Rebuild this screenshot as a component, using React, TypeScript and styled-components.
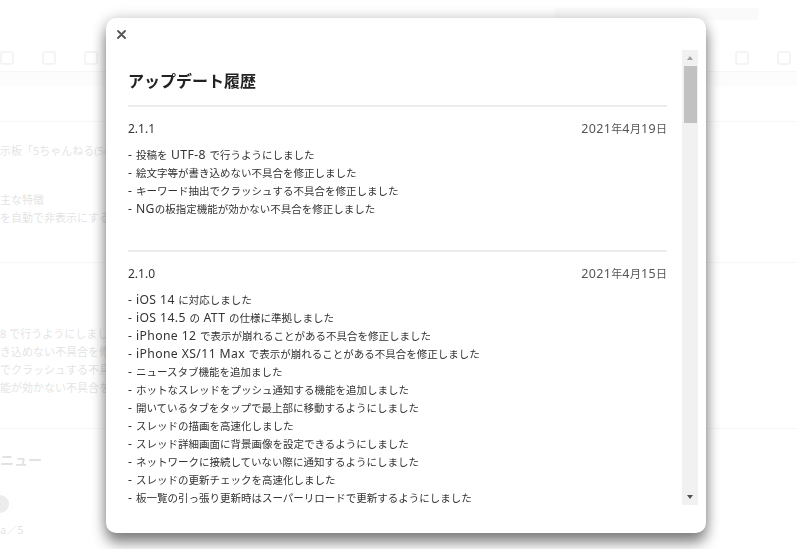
import React from "react";
import styled, { createGlobalStyle } from "styled-components";

const Global = createGlobalStyle`
  html, body { margin: 0; padding: 0; background: #fff; }
  body { font-family: "Noto Sans", "Noto Sans CJK JP", sans-serif; color: #333; overflow: hidden; }
  * { box-sizing: border-box; }
`;

/* ---------- background page ---------- */
const Page = styled.div`
  width: 797px;
  height: 549px;
  overflow: hidden;
  display: flex;
  flex-direction: column;
`;
const TopBar = styled.div`
  height: 45px;
  display: flex;
  justify-content: flex-end;
  align-items: flex-start;
  padding: 8px 38px 0 0;
`;
const TopPill = styled.div`
  width: 205px;
  height: 12px;
  border-radius: 4px;
  background: #dcdcdc;
`;
const TabBar = styled.div`
  height: 27px;
  border-bottom: 1px solid #bbb;
  display: flex;
  align-items: center;
  justify-content: space-between;
  padding: 0 6px 0 0;
`;
const TabGroup = styled.div`
  display: flex;
  gap: 28px;
  align-items: center;
`;
const TabIcon = styled.div`
  width: 14px;
  height: 14px;
  border: 2px solid #b0b0b0;
  border-radius: 3px;
`;
const Band = styled.div`
  height: 14px;
  background: #eaeaea;
`;
const Block = styled.div<{ $h: number }>`
  height: ${(p) => p.$h}px;
  border-bottom: 1px solid #c8c8c8;
  display: flex;
  flex-direction: column;
  padding-top: ${(p) => (p.$h > 100 ? 20 : 0)}px;
`;
const BgText = styled.div<{ $size?: number; $bold?: boolean }>`
  font-size: ${(p) => p.$size || 11}px;
  font-weight: ${(p) => (p.$bold ? 700 : 400)};
  line-height: 18px;
  color: #333;
  white-space: nowrap;
`;
const Spacer = styled.div<{ $h: number }>`
  height: ${(p) => p.$h}px;
  flex: none;
`;
const Circle = styled.div`
  width: 18px;
  height: 18px;
  border-radius: 50%;
  background: #777;
  margin-left: -9px;
`;

/* ---------- overlay + modal ---------- */
const Veil = styled.div`
  position: fixed;
  inset: 0;
  background: rgba(255, 255, 255, 0.86);
`;
const Modal = styled.div`
  position: fixed;
  left: 106px;
  top: 18px;
  width: 600px;
  height: 515px;
  background: #fff;
  border-radius: 10px;
  box-shadow: 0 10px 14px rgba(0, 0, 0, 0.45), 0 0 14px rgba(0, 0, 0, 0.2);
  display: flex;
  flex-direction: column;
`;
const ModalHead = styled.div`
  height: 32px;
  display: flex;
  align-items: flex-start;
  padding: 12px 0 0 11px;
`;
const CloseBtn = styled.button`
  width: 9px;
  height: 9px;
  padding: 0;
  border: none;
  background: none;
  cursor: pointer;
  & svg { display: block; }
`;
const Body = styled.div`
  flex: 1;
  display: flex;
  padding: 0 8px 28px 6px;
  min-height: 0;
`;
const Scroller = styled.div`
  flex: 1;
  overflow: hidden;
  padding: 18px 15px 0 16px;
`;
const Title = styled.h2`
  margin: 0 0 13px;
  font-size: 16px;
  line-height: 24px;
  font-weight: 700;
  color: #222;
  font-family: "Noto Sans CJK JP", sans-serif;
`;
const Section = styled.section`
  border-top: 2px solid #ececec;
  padding: 12px 0 32px;
`;
const SectionHead = styled.div`
  display: flex;
  justify-content: space-between;
  align-items: center;
  height: 18px;
  margin-bottom: 9px;
`;
const Version = styled.span`
  font-size: 12px;
  color: #333;
`;
const DateText = styled.span`
  font-size: 11px;
  line-height: 18px;
  color: #555;
  font-family: "Noto Sans CJK JP", sans-serif;
`;
const List = styled.ul`
  list-style: none;
  margin: 0;
  padding: 0;
`;
const Item = styled.li`
  font-size: 10.5px;
  line-height: 18px;
  height: 18px;
  color: #333;
  white-space: nowrap;
  font-family: "Noto Sans CJK JP", sans-serif;
`;
const Latin = styled.span<{ $size: number }>`
  font-family: "Noto Sans", sans-serif;
  font-size: ${(p) => p.$size}px;
  letter-spacing: 0.4px;
  line-height: 18px;
`;

const Track = styled.div`
  width: 16px;
  background: #f1f1f1;
  display: flex;
  flex-direction: column;
`;
const ArrowBtn = styled.div`
  height: 16px;
  display: flex;
  align-items: center;
  justify-content: center;
`;
const ArrowShape = styled.div<{ $down?: boolean }>`
  width: 0;
  height: 0;
  border-left: 3.5px solid transparent;
  border-right: 3.5px solid transparent;
  ${(p) =>
    p.$down
      ? "border-top: 4px solid #505050;"
      : "border-bottom: 4px solid #a3a3a3;"}
`;
const Rail = styled.div`
  flex: 1;
  padding: 0 1px 0 2px;
`;
const Thumb = styled.div`
  height: 57px;
  background: #c1c1c1;
`;

function Mixed({ text, size }: { text: string; size: number }) {
  const parts = text.match(/[\x20-\x7e]+|[^\x20-\x7e]+/g) || [];
  return (
    <>
      {parts.map((p, i) =>
        /^[\x20-\x7e]+$/.test(p) ? (
          <Latin key={i} $size={size}>
            {p}
          </Latin>
        ) : (
          <React.Fragment key={i}>{p}</React.Fragment>
        )
      )}
    </>
  );
}

const releases = [
  {
    v: "2.1.1",
    date: "2021年4月19日",
    items: [
      "投稿を UTF-8 で行うようにしました",
      "絵文字等が書き込めない不具合を修正しました",
      "キーワード抽出でクラッシュする不具合を修正しました",
      "NGの板指定機能が効かない不具合を修正しました",
    ],
  },
  {
    v: "2.1.0",
    date: "2021年4月15日",
    items: [
      "iOS 14 に対応しました",
      "iOS 14.5 の ATT の仕様に準拠しました",
      "iPhone 12 で表示が崩れることがある不具合を修正しました",
      "iPhone XS/11 Max で表示が崩れることがある不具合を修正しました",
      "ニュースタブ機能を追加ました",
      "ホットなスレッドをプッシュ通知する機能を追加しました",
      "開いているタブをタップで最上部に移動するようにしました",
      "スレッドの描画を高速化しました",
      "スレッド詳細画面に背景画像を設定できるようにしました",
      "ネットワークに接続していない際に通知するようにしました",
      "スレッドの更新チェックを高速化しました",
      "板一覧の引っ張り更新時はスーパーリロードで更新するようにしました",
    ],
  },
];

export default function App() {
  return (
    <>
      <Global />
      <Page>
        <TopBar>
          <TopPill />
        </TopBar>
        <TabBar>
          <TabGroup>
            <TabIcon />
            <TabIcon />
            <TabIcon />
          </TabGroup>
          <TabGroup>
            <TabIcon />
            <TabIcon />
          </TabGroup>
        </TabBar>
        <Band />
        <Block $h={36} />
        <Block $h={141}>
          <BgText>示板「5ちゃんねる(5ch)」専用ブラウザ</BgText>
          <Spacer $h={31} />
          <BgText>主な特徴</BgText>
          <BgText>を自動で非表示にする</BgText>
        </Block>
        <Block $h={166}>
          <Spacer $h={42} />
          <BgText>8 で行うようにしました</BgText>
          <BgText>き込めない不具合を修正</BgText>
          <BgText>でクラッシュする不具合</BgText>
          <BgText>能が効かない不具合を修</BgText>
        </Block>
        <Spacer $h={22} />
        <BgText $size={14} $bold>ニュー</BgText>
        <Spacer $h={26} />
        <Circle />
        <Spacer $h={8} />
        <BgText>a／5</BgText>
      </Page>
      <Veil />
      <Modal>
        <ModalHead>
          <CloseBtn aria-label="close">
            <svg width="9" height="9" viewBox="0 0 9 9">
              <path d="M1 1 L8 8 M8 1 L1 8" stroke="#555" strokeWidth="1.8" strokeLinecap="round" />
            </svg>
          </CloseBtn>
        </ModalHead>
        <Body>
          <Scroller>
            <Title>アップデート履歴</Title>
            {releases.map((r) => (
              <Section key={r.v}>
                <SectionHead>
                  <Version>{r.v}</Version>
                  <DateText>
                    <Mixed text={r.date} size={12.5} />
                  </DateText>
                </SectionHead>
                <List>
                  {r.items.map((t) => (
                    <Item key={t}>
                      <Mixed text={"- " + t} size={12.2} />
                    </Item>
                  ))}
                </List>
              </Section>
            ))}
          </Scroller>
          <Track>
            <ArrowBtn>
              <ArrowShape />
            </ArrowBtn>
            <Rail>
              <Thumb />
            </Rail>
            <ArrowBtn>
              <ArrowShape $down />
            </ArrowBtn>
          </Track>
        </Body>
      </Modal>
    </>
  );
}
